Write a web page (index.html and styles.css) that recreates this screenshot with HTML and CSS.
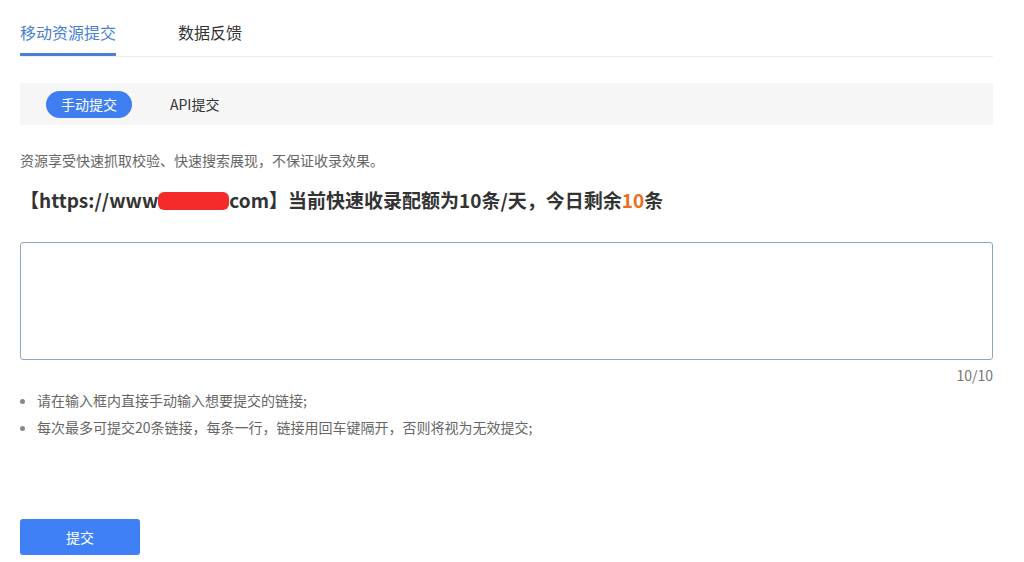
FILE: index.html
```html
<!DOCTYPE html>
<html lang="zh-CN">
<head>
<meta charset="utf-8">
<title>移动资源提交</title>
<link rel="stylesheet" href="styles.css">
</head>
<body>
<div class="page">
  <div class="tabs">
    <div class="tab active">移动资源提交</div>
    <div class="tab">数据反馈</div>
  </div>
  <div class="subbar">
    <div class="pill active">手动提交</div>
    <div class="pill">API提交</div>
  </div>
  <p class="desc">资源享受快速抓取校验、快速搜索展现，不保证收录效果。</p>
  <h2 class="quota">【https://www<span class="mask"></span>com】当前快速收录配额为10条/天，今日剩余<span class="num">10</span>条</h2>
  <textarea class="input"></textarea>
  <div class="count">10/10</div>
  <ul class="tips">
    <li>请在输入框内直接手动输入想要提交的链接;</li>
    <li>每次最多可提交20条链接，每条一行，链接用回车键隔开，否则将视为无效提交;</li>
  </ul>
  <button class="submit">提交</button>
</div>
</body>
</html>
```

FILE: styles.css
```css
* { box-sizing: border-box; }
html, body { margin: 0; padding: 0; background: #fff; }
body {
  font-family: "Noto Sans CJK SC", "Noto Sans", sans-serif;
  color: #666;
}
.page {
  padding: 0 31px 0 20px;
  display: flex;
  flex-direction: column;
}
.tabs {
  display: flex;
  gap: 62px;
  border-bottom: 1px solid #ececec;
}
.tab {
  font-size: 16px;
  line-height: 20px;
  padding: 22px 0 11px;
  color: #333;
  border-bottom: 3px solid transparent;
}
.tab.active {
  color: #4a7fd4;
  border-bottom-color: #4a7fd4;
}
.subbar {
  margin-top: 26px;
  height: 42px;
  background: #f6f6f6;
  display: flex;
  align-items: center;
  padding-left: 26px;
  gap: 38px;
}
.pill {
  font-size: 14px;
  line-height: 27px;
  height: 27px;
  color: #333;
}
.pill.active {
  background: #3f7ef0;
  color: #fff;
  border-radius: 14px;
  padding: 0 15px;
}
.desc {
  margin: 25px 0 0;
  font-size: 14px;
  line-height: 20px;
  color: #666;
}
.quota {
  margin: 17px 0 0;
  font-size: 19px;
  line-height: 26px;
  font-weight: bold;
  color: #333;
}
.mask {
  display: inline-block;
  background: #f52a2a;
  border-radius: 6px;
  height: 18px;
  width: 71px;
  vertical-align: -2px;
}
.num { color: #f06b1c; }
.input {
  margin-top: 29px;
  height: 118px;
  width: 100%;
  border: 1px solid #8ea6c6;
  border-radius: 3px;
  resize: none;
  display: block;
  outline: none;
}
.count {
  margin-top: 6px;
  text-align: right;
  font-size: 14px;
  line-height: 18px;
  color: #777;
}
.tips {
  margin: 3px 0 0;
  padding: 0 0 0 17px;
  font-size: 14px;
  line-height: 27px;
  color: #666;
}
.tips li::marker { color: #888; }
.submit {
  margin-top: 78px;
  width: 120px;
  height: 36px;
  background: #4080f6;
  color: #fff;
  border: none;
  border-radius: 3px;
  font-family: inherit;
  font-size: 14px;
}
```
